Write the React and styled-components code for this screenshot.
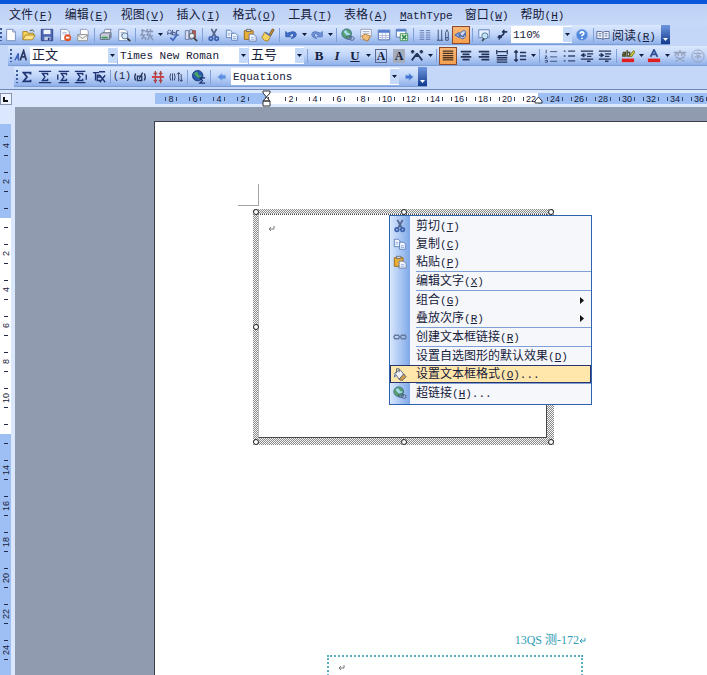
import React from 'react';
import styled, { createGlobalStyle, css } from 'styled-components';

const GlobalStyle = createGlobalStyle`
  * { box-sizing: border-box; }
  body {
    margin: 0;
    overflow: hidden;
    font-family: "Noto Sans CJK SC", sans-serif;
    font-size: 12px;
    color: #16203a;
  }
  button, select {
    border: 0;
    padding: 0;
    margin: 0;
    background: none;
    color: inherit;
    font: inherit;
  }
`;

const Window = styled.div`
  display: flex;
  flex-direction: column;
  height: 100vh;
  overflow: hidden;
  background: #c4d7f9;
  border-top: 4px solid #0a56dc;
`;

const MenuBar = styled.nav`
  display: flex;
  align-items: center;
  height: 21px;
  padding-left: 3px;
  background: linear-gradient(#bcd0f6, #c8daf9);
`;

const MenuButton = styled.button`
  padding: 0 6px;
  line-height: 20px;
  white-space: nowrap;
`;

const Latin = styled.span`
  font-family: "Liberation Mono", monospace;
  font-size: ${p => (p.$small ? 10 : 11)}px;
`;

const Toolbar = styled.div`
  display: flex;
  align-items: center;
  align-self: ${p => (p.$wide ? 'stretch' : 'flex-start')};
  height: 20px;
  margin: 0 0 1px ${p => p.$indent || 0}px;
  overflow: hidden;
  background: linear-gradient(#dbe8fe, #c0d5f9 50%, #8fb0e9);
  border-bottom: 1px solid #7c9dd6;
`;

const Grip = styled.span`
  flex: none;
  width: 2px;
  height: 13px;
  margin-left: ${p => p.$gap || 0}px;
  background: repeating-linear-gradient(#3c5a97 0 2px, transparent 2px 4px);
`;

const ToolButton = styled.button`
  flex: none;
  display: flex;
  align-items: center;
  justify-content: center;
  gap: 2px;
  min-width: 18px;
  height: 18px;
  ${p => p.$label && css`padding-right: 5px;`}
  ${p => p.$active && css`
    background: linear-gradient(#f9b877, #f7a04e);
    border: 1px solid #8a4a2c;
  `}
`;

const ArrowButton = styled.button`
  flex: none;
  display: flex;
  align-items: center;
  justify-content: center;
  width: 8px;
  height: 18px;
`;

const Separator = styled.span`
  flex: none;
  width: 1px;
  height: 14px;
  margin: 0 2px;
  background: #7f9fd8;
`;

const Combo = styled.label`
  flex: none;
  display: flex;
  align-items: center;
  width: ${p => p.$width}px;
  height: 17px;
  margin-right: 1px;
  background: #fff;
`;

const ComboSelect = styled.select`
  flex: 1;
  min-width: 0;
  height: 17px;
  padding-left: 2px;
  appearance: none;
  font-family: "Liberation Mono", "Noto Sans CJK SC", monospace;
  font-size: ${p => (p.$cjk ? 13 : 11)}px;
  line-height: 16px;
`;

const ComboArrow = styled.span`
  display: flex;
  align-items: center;
  justify-content: center;
  width: 9px;
  height: 15px;
  background: #c5d9f9;
`;

const EndCap = styled.button`
  align-self: stretch;
  flex: none;
  display: flex;
  align-items: flex-end;
  justify-content: center;
  width: 9px;
  padding-bottom: 3px;
  background: linear-gradient(#6f97e0, #123a8c);
`;

const RulerRow = styled.div`
  flex: none;
  display: flex;
  align-items: center;
  height: 18px;
  margin-top: 1px;
  border-top: 1px solid #6d86b8;
  background: #dbe7fd;
`;

const TabStop = styled.button`
  flex: none;
  display: flex;
  width: 12px;
  height: 12px;
  border: 1px solid #8794b0;
  background: #eef4ff;
`;

const HRuler = styled.div`
  position: relative;
  flex: 1;
  min-width: 0;
  display: flex;
  height: 11px;
  margin-left: 143px;
  padding-left: 4px;
  background: linear-gradient(90deg, #9dbff4 112px, #fff 112px 383px, #9dbff4 383px);
`;

const HTile = styled.span`
  flex: none;
  display: flex;
  align-items: center;
  justify-content: center;
  gap: 2px;
  width: 24px;
  font: 9px "Liberation Sans", sans-serif;
  &::before, &::after {
    content: '';
    width: 1px;
    height: 4px;
    background: #3a4664;
  }
`;

const Marker = styled.svg`
  position: absolute;
  left: ${p => p.$x}px;
  top: ${p => p.$y}px;
`;

const Body = styled.main`
  flex: 1;
  min-height: 0;
  display: flex;
`;

const VRuler = styled.div`
  flex: none;
  display: flex;
  flex-direction: column;
  width: 15px;
  padding-top: 17px;
  overflow: hidden;
  background: #dbe7fd;
`;

const VScale = styled.div`
  flex: none;
  width: 11px;
  padding-top: 4px;
  background: linear-gradient(#9dbff4 94px, #fff 94px 310px, #9dbff4 310px);
`;

const VTile = styled.span`
  display: flex;
  flex-direction: column;
  align-items: center;
  justify-content: space-between;
  height: 36px;
  padding: 8px 0;
  font: 9px "Liberation Sans", sans-serif;
  &::before, &::after {
    content: '';
    width: 4px;
    height: 1px;
    background: #1f2b48;
  }
`;

const VNumber = styled.span`
  writing-mode: vertical-rl;
  transform: rotate(180deg);
  line-height: 10px;
`;

const Workspace = styled.div`
  flex: 1;
  min-width: 0;
  overflow: hidden;
  padding: 14px 0 0 139px;
  background: #909bb0;
`;

const Paper = styled.article`
  position: relative;
  height: 100%;
  padding-top: 62px;
  background: #fff;
  border: solid #3b3f4c;
  border-width: 1px 0 0 1px;
`;

const CropMark = styled.div`
  width: 21px;
  height: 22px;
  margin-left: 83px;
  border: solid #a3a3a3;
  border-width: 0 1px 1px 0;
`;

const TextFrame = styled.section`
  position: relative;
  width: 301px;
  height: 236px;
  margin: 3px 0 0 98px;
  padding: 5px 7px 7px 5px;
  background: conic-gradient(#8c8c8c 25%, #f4f4f4 0 50%, #8c8c8c 0 75%, #f4f4f4 0) 0 0 / 2px 2px;
`;

const FrameInner = styled.div`
  height: 100%;
  padding: 10px 0 0 9px;
  background: #fff;
  border: 1px solid #4a4a4a;
  border-top-style: dotted;
  border-left-color: #bbb;
  svg { display: block; }
`;

const Handle = styled.span`
  position: absolute;
  left: ${p => p.$x};
  top: ${p => p.$y};
  width: 6px;
  height: 6px;
  margin: -3px 0 0 -3px;
  border: 1px solid #222;
  border-radius: 50%;
  background: #fff;
`;

const NextPage = styled.section`
  width: 259px;
  margin: 186px 0 0 172px;
`;

const PageCode = styled.p`
  margin: 0;
  color: #2f9db4;
  font-family: "Liberation Serif", "Noto Sans CJK SC", serif;
  line-height: 18px;
  text-align: right;
`;

const DottedFrame = styled.div`
  width: 256px;
  height: 60px;
  margin-top: 6px;
  padding: 7px 0 0 9px;
  border: 2px dotted #58afbd;
  svg { display: block; }
`;

const ContextMenu = styled.div`
  position: absolute;
  left: 234px;
  top: 93px;
  width: 203px;
  padding: 1px 0 2px;
  border: 1px solid #2f62ae;
  background: linear-gradient(90deg, #d8e7fd, #7fa8e8 20px, #f5f7fb 20px);
`;

const MenuGroup = styled.div`
  & + &::before {
    content: '';
    display: block;
    height: 1px;
    margin-left: 26px;
    background: #7fa0d6;
  }
`;

const MenuItem = styled.button`
  display: grid;
  grid-template-columns: 20px 1fr 11px;
  column-gap: 6px;
  align-items: center;
  width: 100%;
  height: 18px;
  line-height: 16px;
  text-align: left;
  white-space: nowrap;
  ${p => p.$active && css`
    background: #ffe6ab;
    outline: 1px solid #27346e;
    outline-offset: -1px;
  `}
`;

const IconSlot = styled.span`
  display: flex;
  justify-content: center;
`;

const page = 'M3 1.5h7l3 3V14.5H3z';
const blue = '#3d62ae';

const icons = {
  new: <><path d={page} fill="#fff" stroke="#6f86b8" /><path d="M10 1.5v3h3" fill="none" stroke="#6f86b8" /></>,
  open: <><path d="M1 13V4h5l1 2h6v2" fill="#f7d35e" stroke="#a98020" /><path d="M1 13.5 4 8h11l-3 5.5z" fill="#fce38a" stroke="#a98020" /><path d="M9 3q3-2 5 1" fill="none" stroke="#333" /></>,
  save: <><path d="M1.500 1.500h13v13h-13z" fill="#4c68b5" stroke="#2b3f82" /><path d="M4 2h8v5H4z" fill="#eef3ff" /><path d="M5 10h7v4H5z" fill="#c6d0e8" /><path d="M9 11h2v3H9z" fill="#2b3f82" /></>,
  permission: <><path d={page} fill="#fff" stroke="#7b8db8" /><path d="M5 5h5M5 7h5" stroke="#9db0d4" /><circle cx="11" cy="11" r="4" fill="#e0572d" /><path d="M9 11h4" stroke="#fff" strokeWidth="2" /></>,
  mail: <><path d="M5 1.500h7l2 2V10H5z" fill="#fff" stroke="#8b96ad" /><path d="M2 7.500h11v7H2z" fill="#f1f1ee" stroke="#8b8b8b" /><path d="m2 8 5.500 4L13 8" fill="none" stroke="#8b8b8b" /></>,
  print: <><path d="M5 6 7 1.500h7L12 6z" fill="#fff" stroke="#6c7c9d" /><path d="M1.500 7 4 5.500h10L12 8v5H1.500z" fill="#c8ccd6" stroke="#56617c" /><path d="M12 13V8l2.500-2v5z" fill="#7d879d" /><path d="M3 11h7" stroke="#3f9a58" strokeWidth="2" /></>,
  preview: <><path d="M2 1.500h7l3 3V14.500H2z" fill="#fff" stroke="#6f86b8" /><path d="M4 5h4M4 7h3M4 9h2" stroke="#9aabce" /><circle cx="9" cy="9" r="3.500" fill="#d4e9f7" stroke="#566a8e" /><path d="m12 12 3 3" stroke="#333" strokeWidth="2" /></>,
  translate: <path d="M1 3h5M3 1v4l-2 3h4l-3 5M2 11h4M9 1 7 4h3L8 8h3M12 1v4M10 4h5M12 6l-3 8M10 9h5M12 10l3 4M7 11l-1 3" fill="none" stroke="#8494b4" strokeWidth="1.500" />,
  spell: <><path d="M2 8V4l2-2 2 2v4M2 6h4M7.500 2v6h3V5h-3M15 3h-3v5h3" fill="none" stroke="#3c4d7e" /><path d="m5 11 3 3 5-7" fill="none" stroke="#4168bb" strokeWidth="2" /></>,
  research: <><path d="M1.500 3h4v10h-4zM6.500 2h3v11h-3z" fill="#d8dcec" stroke="#6473a0" /><path d="M10 3h3v8h-3z" fill="#c6625d" stroke="#894444" /><circle cx="9" cy="9" r="3" fill="#e6f0fb" stroke="#555" /><path d="m11 11 4 4" stroke="#444" strokeWidth="2" /></>,
  cut: <><path d="m5 1 5 9M11 1 6 10" stroke="#54658c" strokeWidth="2" /><circle cx="4.500" cy="12" r="2" fill="none" stroke={blue} strokeWidth="2" /><circle cx="11" cy="12" r="2" fill="none" stroke={blue} strokeWidth="2" /></>,
  copy: <><path d="M1.500 2.500H6l2 2V11H1.500z" fill="#f2f7ff" stroke="#587bb9" /><path d="M7.500 6H12l2.500 2.500V14h-7z" fill="#f2f7ff" stroke="#587bb9" /><path d="M9 10h4M9 12h4M3 6h3M3 8h3" stroke="#8ba9dc" /></>,
  paste: <><path d="M1.500 3h10v10h-10z" fill="#e8ae36" stroke="#94661a" /><path d="M4 1.500h5V4H4z" fill="#ddd" stroke="#666" /><path d="M7 7h5l3 3v5H7z" fill="#f5f8ff" stroke="#6376a5" /><path d="M9 11h4M9 13h4" stroke="#8ba9dc" /></>,
  brush: <><path d="m13 1 2 1-4 7-2-1z" fill="#c98c37" stroke="#7b5722" /><path d="m4 5 7 4-3 6q-5 0-7-4z" fill="#f5d25f" stroke="#a37f28" /><path d="m5 5 6 4" stroke="#5473b3" strokeWidth="2" /></>,
  undo: <path d="M2 4v6h6L6 8q5-3 5 0 0 2-3 4 6-1 6-5-1-5-10-1z" fill="#3f6dc9" stroke="#3159ad" />,
  redo: <path d="M14 4v6H8l2-2Q5 5 5 8q0 2 3 4-6-1-6-5 1-5 10-1z" fill="#7193d6" stroke="#4f73bd" />,
  link: <><circle cx="6.500" cy="6.500" r="5.500" fill="#56a16f" stroke="#376b83" /><path d="M3 4q3-3 4 0t4 2q-2 5-5 2T3 4" fill="#a6d9ea" /><path d="M6 11q0-2 2-2h2q2 0 2 2t-2 2H8q-2 0-2-2m4 1q0-2 2-2h1q2 0 2 2t-2 2h-1q-2 0-2-2" fill="none" stroke="#475a7b" /></>,
  borders: <><path d="M2 1.500h12v9l-3 3H2z" fill="#fff" stroke="#8c96ad" /><path d="M4 4h8M4 6h8" stroke="#9aacd0" /><path d="m3 9 4-2 6 2-3 6-5-2z" fill="#f0be78" stroke="#a9743a" /></>,
  table: <><path d="M1.500 2.500h13v11h-13z" fill="#fff" stroke={blue} /><path d="M2 4h12" stroke="#4f7ed3" strokeWidth="3" /><path d="M2 8.500h12M2 11h12M6 5v9M10 5v9" stroke="#a5b6d9" /></>,
  excel: <><path d="M1.500 1.500h11v9h-11z" fill="#fff" stroke={blue} /><path d="M2 3h10" stroke="#4f7ed3" strokeWidth="2" /><path d="M6 6.500h8.500v8H6z" fill="#eef8ee" stroke="#32894c" /><path d="m8 8 5 5M13 8l-5 5" stroke="#32894c" strokeWidth="2" /></>,
  columns: <path d="M2 3h5M2 5.500h5M2 8h5M2 10.500h5M2 13h5M9 3h5M9 5.500h5M9 8h5M9 10.500h5M9 13h5" stroke="#5a72a8" />,
  direction: <path d="M2.500 2v12M6.500 2v12M1 14h7M11 14V5l1.500-3L14 5v9zM11 11h3" fill="none" stroke="#31476f" />,
  drawing: <><path d="M1 8 6 5v6z" fill="#7ca5e8" stroke={blue} /><path d="M7 6q5-5 6-2v6q-3 4-6 1z" fill="#c8d8f1" stroke={blue} /><path d="m7 8 3 2 3-4" fill="none" stroke="#50629a" strokeWidth="1.500" /></>,
  docmap: <><path d="M2 2h12v9H2z" fill="#e8f2ff" stroke="#5e7cba" /><circle cx="9" cy="9" r="3.500" fill="#c1e2f4" stroke="#4d6f95" /><path d="m8 12-2 3" stroke="#444" strokeWidth="2" /></>,
  marks: <path d="M10 2v5M8 4.500h6M10 7l-4 3M5 8v5M3 10.500h5" fill="none" stroke="#26355c" strokeWidth="2" />,
  help: <><circle cx="8" cy="8" r="6.500" fill="#4f87de" stroke="#8fb2ec" /><path d="M6 6.500q0-2 2-2t2 2q0 1-2 2v1M8 11v1.500" fill="none" stroke="#fff" strokeWidth="2" /></>,
  read: <path d="M1 4h5l2 1 2-1h5v8h-5l-2 1-2-1H1zM8 5v8M3 6.500h3M3 9h3M10 6.500h3M10 9h3" fill="#edf3ff" stroke="#52648f" />,
  justify: <path d="M2 2.500h12M2 5h12M2 7.500h12M2 10h12M2 12.500h12" stroke="#4a3424" strokeWidth="1.500" />,
  center: <path d="M2 3h12M4 6h8M2 9h12M4 12h8" stroke="#253358" strokeWidth="2" />,
  right: <path d="M2 3h12M5 6h9M2 9h12M5 12h9" stroke="#253358" strokeWidth="2" />,
  distribute: <path d="M2 1v5M14 1v5M3 3h10M2 7.500h12M2 10h12M2 12.500h12M2 15h12" stroke="#253358" strokeWidth="1.500" />,
  spacing: <path d="M3.500 2v12M1.500 4l2-2 2 2M1.500 12l2 2 2-2M8 4h7M8 8h7M8 12h7" fill="none" stroke="#253358" strokeWidth="1.500" />,
  numbers: <path d="M2.500 1v4M1 8h2.500L1 10.500h3M1 13h3v2H1M7 3h8M7 9h8M7 14h8" fill="none" stroke="#34466f" />,
  bullets: <path d="M2 2.500h2M2 8h2M2 13.500h2M7 2.500h8M7 8h8M7 13.500h8" stroke="#34466f" strokeWidth="1.500" />,
  outdent: <path d="M1 2.500h14M8 5.500h7M8 8.500h5M1 11.500h14M8 14h4M5 5 2 7l3 2M2 7h5" fill="none" stroke="#253358" strokeWidth="1.500" />,
  indent: <path d="M1 2.500h14M8 5.500h7M8 8.500h5M1 11.500h14M8 14h4M3 5l3 2-3 2M1 7h5" fill="none" stroke="#253358" strokeWidth="1.500" />,
  marker: <><path d="M2 4h3v4H2V6h3M7 1v7h3V4H7" fill="none" stroke="#4b4a1d" strokeWidth="1.500" /><path d="m10 8 4-6 2 1-4 6z" fill="#d8d03f" stroke="#77711d" /><path d="M1 11h14v4H1z" fill="#e21f1f" /></>,
  fontColor: <><path d="m4 9 4-8 4 8M6 6h4" fill="none" stroke="#314d96" strokeWidth="2" /><path d="M1 11h14v4H1z" fill="#e21f1f" /></>,
  phonetic: <path d="M8 1v2M1 4h14M6 4v4M10 4v4M4 5 2 8M12 5l2 3M3 9l10 5M13 9 3 14" fill="none" stroke="#929db5" strokeWidth="1.500" />,
  enclosed: <><circle cx="8" cy="8" r="7" fill="none" stroke="#929db5" /><path d="M4 6V5h8v1M6 7h4l-2 2v3M4 9h8M8 3v2" fill="none" stroke="#929db5" /></>,
  scale: <path d="M1 3h4M11 3h4M3 1v4M13 1v4M8 5 2 13M8 5l6 8M5 8h6" fill="none" stroke="#253358" strokeWidth="2" />,
  styles: <><path d="m1 13 4-8v8M2 10h3" fill="none" stroke="#3960bd" strokeWidth="1.500" /><path d="m7 13 4-11 3 11M8 9h5" fill="none" stroke="#2d3b67" strokeWidth="2" /></>,
  sigma: <path d="M12 5V3H4l4 5-4 5h8v-2" fill="none" stroke="#1f3474" strokeWidth="2" />,
  sigmaLines: <path d="M1 1.500h14M1 14.500h14M11 6V4H5l3 4-3 4h6v-2" fill="none" stroke="#1f3474" strokeWidth="1.500" />,
  sigmaLeft: <path d="M3 1.500h12M3 14.500h12M2 5v6M12 6V4H6l3 4-3 4h6v-2" fill="none" stroke="#1f3474" strokeWidth="1.500" />,
  sigmaRight: <path d="M1 1.500h12M1 14.500h12M14 5v6M10 6V4H4l3 4-3 4h6v-2" fill="none" stroke="#1f3474" strokeWidth="1.500" />,
  tex: <path d="M1 3h7M4 3v9M6 8h4M9 6H6v6h4M9 6l6 8M15 6l-6 8M8 2h7" fill="none" stroke="#1f3474" strokeWidth="1.500" />,
  eqUpdate: <path d="M3 4Q1 8 3 12M13 4q2 4 0 8M5 12V7h5v5zM7 10l4-7" fill="none" stroke="#26355c" strokeWidth="1.500" />,
  eqBreak: <><path d="M1 8h14" stroke="#d02f2f" strokeWidth="2" /><path d="M5 1v6M5 9v6M11 1v6M11 9v6M3 4h4M9 12h4M9 4h4M3 12h4" stroke="#a8403f" strokeWidth="1.500" /></>,
  eqFormat: <path d="M2 4Q0 8 2 12M4 4v8M6 4q2 4 0 8M11 3v10M9 5l2-2 2 2M14 5v8M12 11l2 2 2-2" fill="none" stroke="#26355c" />,
  globe: <><circle cx="6.500" cy="6.500" r="6" fill="#275ab0" stroke="#1c3a75" /><path d="M2 4q4-4 5 0t4 2q-1 5-4 3T2 4" fill="#49a266" /><path d="M15 9H9l3 3-3 3h6" fill="none" stroke="#1c3474" strokeWidth="1.500" /></>,
  prev: <path d="M3 8l5-4v2h4v4H8v2z" fill="#5c8fe0" stroke="#86abe7" />,
  next: <path d="M13 8 8 4v2H4v4h4v2z" fill="#3e74cf" stroke="#86abe7" />,
  chain: <path d="M2 6h4l2 2-2 2H2L1 8zM14 6h-4L8 8l2 2h4l1-2z" fill="none" stroke="#66789b" strokeWidth="1.500" />,
  bucket: <><path d="m2 7 6-4 5 6-6 5z" fill="#f1f1f1" stroke="#555f78" /><path d="M4 7V2h3v4" fill="none" stroke="#555f78" /><path d="m12 8 3 3-5 5-3-2z" fill="#d39c3d" stroke="#495c8d" /><path d="M2 8q-2 3 0 4 2-1 0-4" fill="#4775c7" /></>,
};

const Icon = ({ name }) => (
  <svg width="14" height="14" viewBox="0 0 16 16" aria-hidden="true">{icons[name]}</svg>
);

const Glyph = styled.span`
  min-width: 12px;
  font: ${p => p.$style || 'normal'} bold ${p => p.$size || 12}px "Liberation Serif", serif;
  line-height: 14px;
  text-align: center;
  text-decoration: ${p => p.$line || 'none'};
  ${p => p.$box && css`border: 1px solid #5b6b94; line-height: 12px;`}
  ${p => p.$shade && css`background: #a5adbd;`}
`;

const Down = ({ color = '#111c3c' }) => (
  <svg width="5" height="3" viewBox="0 0 5 3" aria-hidden="true"><path d="M0 0h5L2.500 3z" fill={color} /></svg>
);

const Return = ({ color = '#777' }) => (
  <svg width="7" height="7" viewBox="0 0 7 7" aria-hidden="true">
    <path d="M6 1v3H1M3 2 1 4l2 2" fill="none" stroke={color} />
  </svg>
);

const Caption = ({ text, hotkey, tail }) => (
  <>{text}<Latin>(<u>{hotkey}</u>){tail}</Latin></>
);

// '|' is a separator, 'v' a drop-down arrow, '*name' a pressed button
const Tools = ({ list }) => list.split(' ').map((name, i) => {
  if (name === '|') return <Separator key={i} />;
  if (name === 'v') return <ArrowButton key={i} aria-label="more"><Down /></ArrowButton>;
  const active = name[0] === '*';
  const id = active ? name.slice(1) : name;
  return (
    <ToolButton key={i} $active={active} aria-label={id}>
      <Icon name={id} />
    </ToolButton>
  );
});

const Select = ({ label, value, width, cjk }) => (
  <Combo $width={width}>
    <ComboSelect aria-label={label} $cjk={cjk} defaultValue={value}>
      <option>{value}</option>
    </ComboSelect>
    <ComboArrow><Down /></ComboArrow>
  </Combo>
);

const menus = [
  ['文件', 'F'], ['编辑', 'E'], ['视图', 'V'], ['插入', 'I'], ['格式', 'O'],
  ['工具', 'T'], ['表格', 'A'], null, ['窗口', 'W'], ['帮助', 'H'],
];

const contextGroups = [
  [
    { icon: 'cut', text: '剪切', hotkey: 'T' },
    { icon: 'copy', text: '复制', hotkey: 'C' },
    { icon: 'paste', text: '粘贴', hotkey: 'P' },
  ],
  [{ text: '编辑文字', hotkey: 'X' }],
  [
    { text: '组合', hotkey: 'G', sub: true },
    { text: '叠放次序', hotkey: 'R', sub: true },
  ],
  [{ icon: 'chain', text: '创建文本框链接', hotkey: 'R' }],
  [
    { text: '设置自选图形的默认效果', hotkey: 'D' },
    { icon: 'bucket', text: '设置文本框格式', hotkey: 'O', tail: '...', active: true },
  ],
  [{ icon: 'link', text: '超链接', hotkey: 'H', tail: '...' }],
];

const handles = [
  ['3px', '3px'], ['50%', '3px'], ['298px', '3px'],
  ['3px', '50%'], ['298px', '50%'],
  ['3px', '233px'], ['50%', '233px'], ['298px', '233px'],
];

const hNumbers = [8, 6, 4, 2, '', ...Array.from({ length: 18 }, (_, i) => (i + 1) * 2)];
const vNumbers = [4, 2, '', 2, 4, 6, 8, 10, '', 14, 16, 18, 20, 22, 24, ''];

const App = () => (
  <>
    <GlobalStyle />
    <Window>
      <MenuBar>
        {menus.map((m, i) => (
          <MenuButton key={i}>
            {m ? <Caption text={m[0]} hotkey={m[1]} /> : <Latin><u>M</u>athType</Latin>}
          </MenuButton>
        ))}
      </MenuBar>

      <Toolbar>
        <Grip />
        <Tools list="new open save permission mail | print preview | translate v spell research | cut copy paste brush | undo v redo v | link borders table excel | columns direction *drawing | docmap marks" />
        <Select label="显示比例" value="110%" width={61} />
        <Tools list="help |" />
        <ToolButton $label><Icon name="read" /><span><Caption text="阅读" hotkey="R" /></span></ToolButton>
        <EndCap aria-label="options"><Down color="#fff" /></EndCap>
      </Toolbar>

      <Toolbar $wide $indent={8}>
        <Grip $gap={2} />
        <Tools list="styles" />
        <Select label="样式" value="正文" width={87} cjk />
        <Select label="字体" value="Times New Roman" width={130} />
        <Select label="字号" value="五号" width={55} cjk />
        <Separator />
        <ToolButton><Glyph $size={13}>B</Glyph></ToolButton>
        <ToolButton><Glyph $size={13} $style="italic">I</Glyph></ToolButton>
        <ToolButton><Glyph $size={13} $line="underline">U</Glyph></ToolButton>
        <Tools list="v" />
        <ToolButton><Glyph $box>A</Glyph></ToolButton>
        <ToolButton><Glyph $shade>A</Glyph></ToolButton>
        <Tools list="scale v | *justify center right distribute spacing v | numbers bullets outdent indent | marker v fontColor v phonetic enclosed" />
      </Toolbar>

      <Toolbar $indent={14}>
        <Grip $gap={2} />
        <Tools list="sigma sigmaLines sigmaLeft sigmaRight tex |" />
        <ToolButton><Latin $small>(1)</Latin></ToolButton>
        <Tools list="eqUpdate eqBreak eqFormat | globe | prev" />
        <Select label="MathType" value="Equations" width={168} />
        <Tools list="next" />
        <EndCap aria-label="options"><Down color="#fff" /></EndCap>
      </Toolbar>

      <RulerRow>
        <TabStop aria-label="tab stop">
          <svg width="10" height="10" viewBox="0 0 10 10"><path d="M3 3v4h4" fill="none" stroke="#111" strokeWidth="2" /></svg>
        </TabStop>
        <HRuler>
          {hNumbers.map((n, i) => <HTile key={i}>{n}</HTile>)}
          <Marker $x={107} $y={-3} width="9" height="17" viewBox="0 0 9 17">
            <path d="M1 1h7v2L4.500 7 1 3zM4.500 7 8 11H1zM1 11h7v5H1z" fill="#fff" stroke="#333" />
          </Marker>
          <Marker $x={379} $y={3} width="9" height="8" viewBox="0 0 9 8">
            <path d="M4.500 1 8 5v2H1V5z" fill="#fff" stroke="#333" />
          </Marker>
        </HRuler>
      </RulerRow>

      <Body>
        <VRuler>
          <VScale>
            {vNumbers.map((n, i) => <VTile key={i}><VNumber>{n}</VNumber></VTile>)}
          </VScale>
        </VRuler>
        <Workspace>
          <Paper>
            <CropMark />
            <TextFrame>
              <FrameInner><Return /></FrameInner>
              {handles.map(([x, y]) => <Handle key={x + y} $x={x} $y={y} />)}
            </TextFrame>
            <NextPage>
              <PageCode>13QS 测-172<Return color="#2f9db4" /></PageCode>
              <DottedFrame><Return /></DottedFrame>
            </NextPage>
            <ContextMenu role="menu">
              {contextGroups.map((group, g) => (
                <MenuGroup key={g}>
                  {group.map(item => (
                    <MenuItem key={item.text} role="menuitem" $active={item.active}>
                      <IconSlot>{item.icon && <Icon name={item.icon} />}</IconSlot>
                      <span><Caption {...item} /></span>
                      {item.sub && (
                        <svg width="4" height="7" viewBox="0 0 4 7"><path d="M0 0v7l4-3.500z" fill="#111" /></svg>
                      )}
                    </MenuItem>
                  ))}
                </MenuGroup>
              ))}
            </ContextMenu>
          </Paper>
        </Workspace>
      </Body>
    </Window>
  </>
);

export default App;
